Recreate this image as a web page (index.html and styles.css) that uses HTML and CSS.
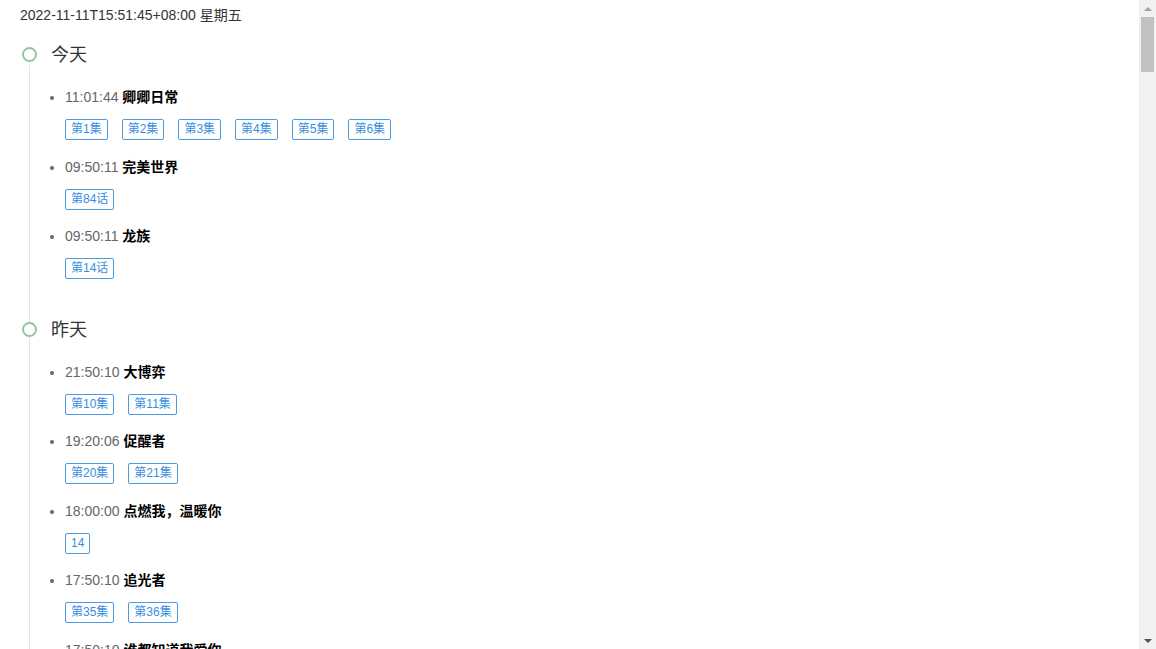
FILE: index.html
```html
<!DOCTYPE html>
<html lang="zh-CN">
<head>
    <meta charset="UTF-8">
    <meta name="viewport" content="width=device-width, initial-scale=1.0">
    <title>更新时间线</title>
    <link rel="stylesheet" href="styles.css">
</head>
<body>
    <div class="now">2022-11-11T15:51:45+08:00 星期五</div>
    <ul class="timeline">
        <li class="day">
            <span class="dot"></span>
            <h2 class="day-title">今天</h2>
            <ul class="updates">
                <li class="update">
                    <div class="update-head"><span class="time">11:01:44</span> <span class="name">卿卿日常</span></div>
                    <div class="tags">
                        <a class="tag" href="#">第1集</a>
                        <a class="tag" href="#">第2集</a>
                        <a class="tag" href="#">第3集</a>
                        <a class="tag" href="#">第4集</a>
                        <a class="tag" href="#">第5集</a>
                        <a class="tag" href="#">第6集</a>
                    </div>
                </li>
                <li class="update">
                    <div class="update-head"><span class="time">09:50:11</span> <span class="name">完美世界</span></div>
                    <div class="tags">
                        <a class="tag" href="#">第84话</a>
                    </div>
                </li>
                <li class="update">
                    <div class="update-head"><span class="time">09:50:11</span> <span class="name">龙族</span></div>
                    <div class="tags">
                        <a class="tag" href="#">第14话</a>
                    </div>
                </li>
            </ul>
        </li>
        <li class="day">
            <span class="dot"></span>
            <h2 class="day-title">昨天</h2>
            <ul class="updates">
                <li class="update">
                    <div class="update-head"><span class="time">21:50:10</span> <span class="name">大博弈</span></div>
                    <div class="tags">
                        <a class="tag" href="#">第10集</a>
                        <a class="tag" href="#">第11集</a>
                    </div>
                </li>
                <li class="update">
                    <div class="update-head"><span class="time">19:20:06</span> <span class="name">促醒者</span></div>
                    <div class="tags">
                        <a class="tag" href="#">第20集</a>
                        <a class="tag" href="#">第21集</a>
                    </div>
                </li>
                <li class="update">
                    <div class="update-head"><span class="time">18:00:00</span> <span class="name">点燃我，温暖你</span></div>
                    <div class="tags">
                        <a class="tag" href="#">14</a>
                    </div>
                </li>
                <li class="update">
                    <div class="update-head"><span class="time">17:50:10</span> <span class="name">追光者</span></div>
                    <div class="tags">
                        <a class="tag" href="#">第35集</a>
                        <a class="tag" href="#">第36集</a>
                    </div>
                </li>
                <li class="update">
                    <div class="update-head"><span class="time">17:50:10</span> <span class="name">谁都知道我爱你</span></div>
                    <div class="tags">
                        <a class="tag" href="#">第17集</a>
                        <a class="tag" href="#">第18集</a>
                    </div>
                </li>
            </ul>
        </li>
    </ul>

    <!-- barre de défilement dessinée (le navigateur sans tête ne l'affiche pas) -->
    <div class="scrollbar" aria-hidden="true">
        <span class="scroll-btn scroll-up"></span>
        <span class="scroll-thumb"></span>
        <span class="scroll-btn scroll-down"></span>
    </div>
</body>
</html>
```

FILE: styles.css
```css
body {
    margin: 0;
    padding: 5px 37px 20px 20px;
    font-family: "Liberation Sans", "Noto Sans CJK SC", sans-serif;
    font-size: 14px;
    color: #333;
    background: #fff;
}

.now {
    line-height: 20px;
}

.timeline {
    list-style: none;
    margin: 18px 0 0;
    padding: 0;
}

.day {
    position: relative;
    padding-left: 31px;
    padding-bottom: 22px;
}

/* ligne verticale */
.day::before {
    content: "";
    position: absolute;
    left: 9px;
    top: 22px;
    bottom: -22px;
    width: 1px;
    background: #e4e4e4;
}

.dot {
    position: absolute;
    left: 2px;
    top: 4px;
    width: 11px;
    height: 11px;
    border: 2px solid #94c4a2;
    border-radius: 50%;
    background: #fff;
    z-index: 1;
}

.day-title {
    margin: 0;
    font-size: 18px;
    font-weight: normal;
    line-height: 24px;
    color: #333;
}

.updates {
    margin: 20px 0 0;
    padding-left: 14px;
    list-style: disc;
    color: #666;
}

.update {
    margin-bottom: 16.5px;
    font-size: 14px;
}

.update-head {
    line-height: 20px;
}

.time {
    color: #666;
}

.name {
    font-weight: bold;
    color: #000;
}

.tags {
    display: flex;
    flex-wrap: wrap;
    gap: 14px;
    margin-top: 12px;
}

.tag {
    display: inline-block;
    padding: 0 5px;
    border: 1px solid #4a9be3;
    border-radius: 2px;
    font-size: 12px;
    line-height: 19px;
    color: #3a8ee0;
    text-decoration: none;
}

/* barre de défilement */
.scrollbar {
    position: fixed;
    top: 0;
    right: 0;
    bottom: 0;
    width: 17px;
    display: flex;
    flex-direction: column;
    background: #f1f1f1;
}

.scroll-btn {
    height: 17px;
    display: flex;
    align-items: center;
    justify-content: center;
}

.scroll-btn::after {
    content: "";
    width: 0;
    height: 0;
    border-left: 4px solid transparent;
    border-right: 4px solid transparent;
}

.scroll-up::after {
    border-bottom: 4px solid #a3a3a3;
}

.scroll-down {
    margin-top: auto;
}

.scroll-down::after {
    border-top: 4px solid #505050;
}

.scroll-thumb {
    height: 55px;
    margin: 0 2px;
    background: #c1c1c1;
}
```
